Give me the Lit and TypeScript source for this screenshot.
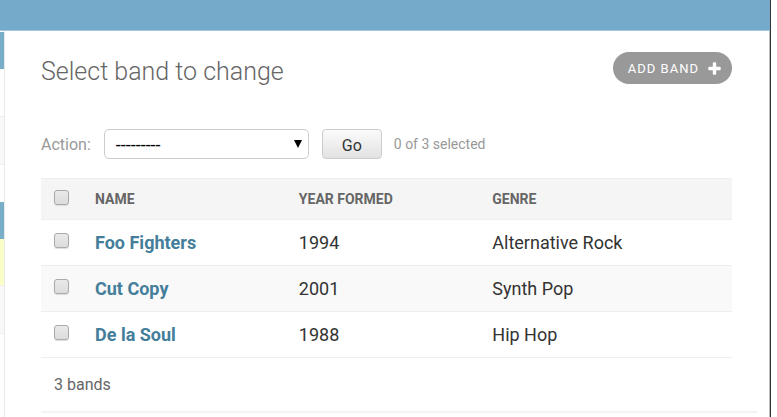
import { LitElement, html, css } from "lit";
import { customElement, state } from "lit/decorators.js";

interface Band {
  name: string;
  year: number;
  genre: string;
}

@customElement("app-root")
export class AppRoot extends LitElement {
  static styles = css`
    :host {
      display: block;
      box-sizing: border-box;
      min-height: 100vh;
      padding-right: 6px;
      background: #fff;
      font-family: Roboto, "Liberation Sans", sans-serif;
      color: #333;
    }
    * {
      box-sizing: border-box;
    }
    .window {
      display: flex;
      flex-direction: column;
      min-height: 100vh;
      border-right: 1px solid #333;
    }
    .topbar {
      height: 31px;
      background: #75aaca;
      border-bottom: 1px solid #a3c7dc;
    }
    .body {
      flex: 1;
      display: flex;
      border-right: 1px solid #bbb;
    }
    .side {
      width: 5px;
      padding-top: 1px;
      border-right: 1px solid #eaeaea;
    }
    .caption {
      height: 37px;
      background: #79aec8;
    }
    .item {
      height: 48px;
      border-bottom: 1px solid #eee;
    }
    .group {
      height: 133px;
    }
    .alt {
      background: #f8f8f8;
    }
    .current {
      background: #faffc6;
      height: 47px;
    }
    main {
      flex: 1;
      padding: 21px 12px 0 36px;
    }
    .heading,
    .actions,
    table {
      width: calc(100% - 25px);
    }
    .heading {
      display: flex;
      justify-content: space-between;
      align-items: flex-start;
      height: 77px;
    }
    h1 {
      margin: 4px 0 0;
      font-size: 25px;
      line-height: 32px;
      font-weight: 300;
      color: #666;
    }
    .add {
      display: flex;
      align-items: center;
      gap: 9px;
      height: 32px;
      padding: 0 11px 0 15px;
      border-radius: 16px;
      background: #999;
      color: #fff;
      font-size: 13px;
      letter-spacing: 1px;
      text-transform: uppercase;
      text-decoration: none;
    }
    .actions {
      display: flex;
      align-items: center;
      height: 30px;
      margin-bottom: 19px;
      font-size: 16px;
      color: #999;
    }
    .picker {
      position: relative;
      margin: 0 13px;
    }
    select {
      display: block;
      appearance: none;
      width: 205px;
      height: 30px;
      padding: 0 11px;
      border: 1px solid #ccc;
      border-radius: 5px;
      background: #fff;
      color: #000;
      font: 18px Roboto, sans-serif;
    }
    .arrow {
      position: absolute;
      right: 7px;
      top: 11px;
      pointer-events: none;
    }
    button {
      width: 60px;
      height: 30px;
      margin-right: 12px;
      padding: 2px 0 0;
      border: 1px solid #ccc;
      border-radius: 4px;
      background: linear-gradient(#fbfbfb, #e2e2e2);
      color: #333;
      font: 16px Roboto, sans-serif;
    }
    .count {
      font-size: 14px;
    }
    table {
      border-collapse: separate;
      border-spacing: 0;
      table-layout: fixed;
    }
    th,
    td {
      padding: 0;
      text-align: left;
      border-bottom: 1px solid #eee;
    }
    thead th {
      height: 42px;
      border-top: 1px solid #eee;
      background: #f5f5f5;
      font-size: 14px;
      line-height: 16px;
      font-weight: 700;
      color: #666;
      text-transform: uppercase;
    }
    tbody th,
    tbody td {
      height: 46px;
      font-size: 18px;
      line-height: 20px;
    }
    tbody tr:nth-child(even) {
      background: #f9f9f9;
    }
    .check {
      width: 54px;
      padding-left: 13px;
    }
    .name {
      width: 29.5%;
    }
    .year {
      width: 28%;
    }
    tbody a {
      color: #447e9b;
      font-weight: 700;
      text-decoration: none;
    }
    input {
      display: block;
      appearance: none;
      width: 15px;
      height: 15px;
      margin: 0 0 4px;
      border: 1px solid #aaa;
      border-radius: 3px;
      background: linear-gradient(#e9e9e9, #dcdcdc);
      box-shadow: 0 1px 1px #ddd;
    }
    input:checked {
      background: #447e9b;
    }
    .total {
      margin: 0;
      height: 55px;
      padding: 17px 13px 0;
      border-bottom: 2px solid #f4f4f4;
      font-size: 16px;
      line-height: 20px;
      color: #666;
    }
  `;

  @state() private bands: Band[] = [
    { name: "Foo Fighters", year: 1994, genre: "Alternative Rock" },
    { name: "Cut Copy", year: 2001, genre: "Synth Pop" },
    { name: "De la Soul", year: 1988, genre: "Hip Hop" },
  ];

  @state() private selected = new Set<string>();

  private toggle(name: string) {
    const next = new Set(this.selected);
    if (!next.delete(name)) next.add(name);
    this.selected = next;
  }

  private toggleAll(e: Event) {
    const on = (e.target as HTMLInputElement).checked;
    this.selected = new Set(on ? this.bands.map((b) => b.name) : []);
  }

  render() {
    return html`
      <div class="window">
        <header class="topbar"></header>
        <div class="body">
          <aside class="side">
            <div class="caption"></div>
            <div class="group">
              <div class="item"></div>
              <div class="item alt"></div>
            </div>
            <div class="caption"></div>
            <div class="item current"></div>
            <div class="item alt"></div>
          </aside>
          <main>
            <div class="heading">
              <h1>Select band to change</h1>
              <a class="add" href="#add"
                >Add band
                <svg width="13" height="13" viewBox="0 0 13 13" aria-hidden="true">
                  <path
                    d="M4.8 1.2Q4.8 .3 5.7 .3H7.3Q8.2 .3 8.2 1.2V4.8H11.8Q12.7 4.8 12.7 5.7V7.3Q12.7 8.2 11.8 8.2H8.2V11.8Q8.2 12.7 7.3 12.7H5.7Q4.8 12.7 4.8 11.8V8.2H1.2Q.3 8.2 .3 7.3V5.7Q.3 4.8 1.2 4.8H4.8Z"
                    fill="#fff"
                  />
                </svg>
              </a>
            </div>
            <form class="actions" @submit=${(e: Event) => e.preventDefault()}>
              <label for="action">Action:</label>
              <span class="picker">
                <select id="action">
                  <option>---------</option>
                </select>
                <svg class="arrow" width="8" height="8" viewBox="0 0 8 8" aria-hidden="true">
                  <path d="M0 0H8L4 8Z" fill="#000" />
                </svg>
              </span>
              <button type="submit">Go</button>
              <span class="count">${this.selected.size} of ${this.bands.length} selected</span>
            </form>
            <table>
              <thead>
                <tr>
                  <th class="check">
                    <input
                      type="checkbox"
                      aria-label="Select all bands"
                      .checked=${this.selected.size === this.bands.length}
                      @change=${this.toggleAll}
                    />
                  </th>
                  <th class="name" scope="col">Name</th>
                  <th class="year" scope="col">Year formed</th>
                  <th scope="col">Genre</th>
                </tr>
              </thead>
              <tbody>
                ${this.bands.map(
                  (b) => html`<tr>
                    <td class="check">
                      <input
                        type="checkbox"
                        aria-label="Select ${b.name}"
                        .checked=${this.selected.has(b.name)}
                        @change=${() => this.toggle(b.name)}
                      />
                    </td>
                    <th scope="row"><a href="#band">${b.name}</a></th>
                    <td>${b.year}</td>
                    <td>${b.genre}</td>
                  </tr>`,
                )}
              </tbody>
            </table>
            <p class="total">${this.bands.length} bands</p>
          </main>
        </div>
      </div>
    `;
  }
}
